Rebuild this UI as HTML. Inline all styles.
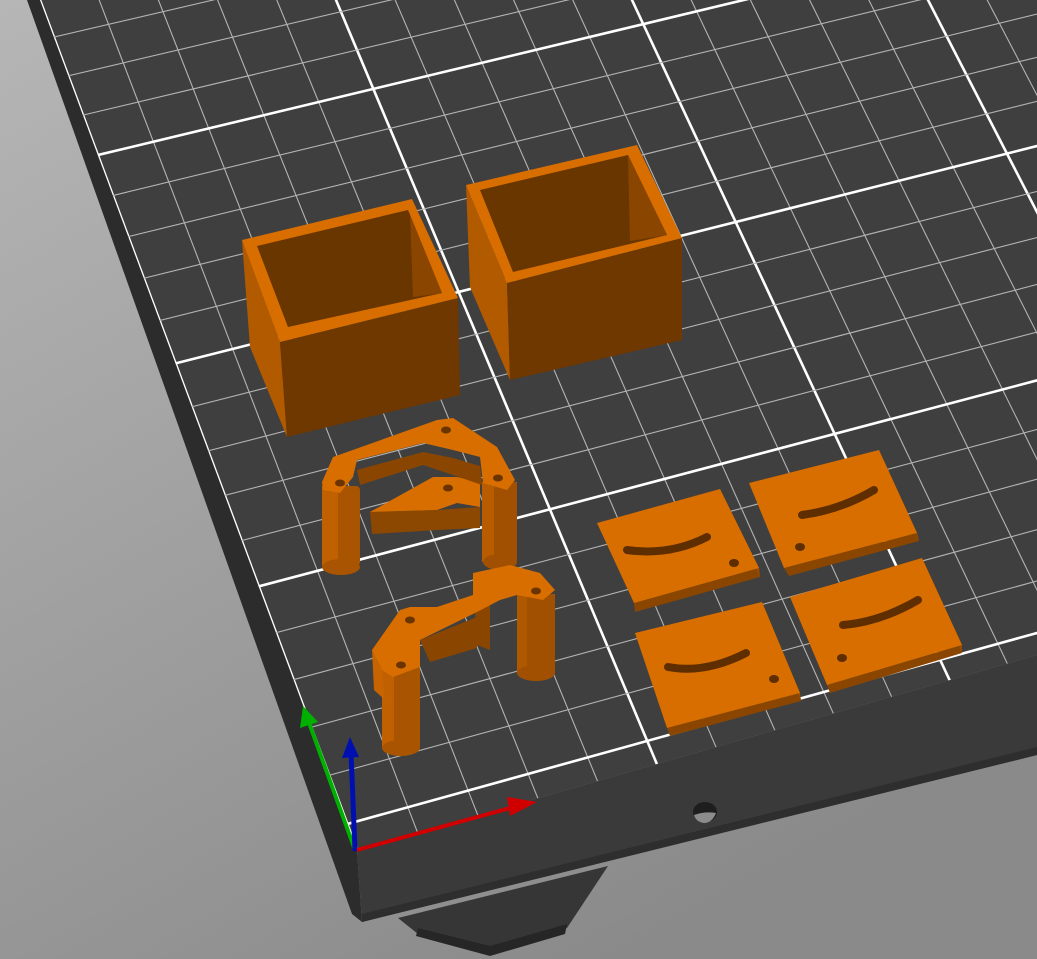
<!DOCTYPE html>
<html><head><meta charset="utf-8"><style>
html,body{margin:0;padding:0;width:1037px;height:959px;overflow:hidden;background:#9c9c9c}
svg{display:block}
</style></head><body>
<svg id="s" width="1037" height="959" viewBox="0 0 1037 959" xmlns="http://www.w3.org/2000/svg">
<defs>
<linearGradient id="bg" x1="0" y1="0" x2="0.6" y2="1">
<stop offset="0" stop-color="#b6b6b6"/><stop offset="1" stop-color="#8a8a8a"/>
</linearGradient>
<clipPath id="topclip"><polygon points="40,0 1037,0 1037,655 357,850"/></clipPath>
</defs>
<rect width="1037" height="959" fill="url(#bg)"/>
<!-- foot -->
<polygon points="398,918 608,866 567,928 490,950 418,934" fill="#363636"/>
<polygon points="418,928 490,946 567,924 565,934 490,956 416,936" fill="#262626"/>
<!-- left side face -->
<polygon points="27,0 40,0 357,850 362,922 352,914" fill="#2c2c2c"/>
<!-- front face -->
<polygon points="357,850 1037,655 1037,755 362,922" fill="#3a3a3a"/>
<polygon points="362,914 1037,747 1037,755 362,922" fill="#2e2e2e"/>
<ellipse cx="705" cy="812" rx="12" ry="10" fill="#1e1e1e"/>
<path d="M694,815 Q705,811 716,813 Q712,823 704,823 Q696,822 694,815Z" fill="#8c8c8c"/>
<!-- top -->
<polygon points="40,0 1037,0 1037,655 357,850" fill="#3f3f3f"/>
<g id="grid" clip-path="url(#topclip)"></g>

<!-- Box 1 -->
<polygon points="242,240 280,342 287,437 250,347" fill="#b25a00"/>
<polygon points="280,342 458,298 460,395 287,437" fill="#6e3800"/>
<polygon points="242,240 412,199 458,298 280,342" fill="#d86e00"/>
<polygon points="257,246 408,210 442,293 288,327" fill="#6a3600"/>
<polygon points="408,210 442,293 413,297 410,214" fill="#8a4600"/>
<!-- Box 2 -->
<polygon points="466,185 507,283 510,380 470,287" fill="#b25a00"/>
<polygon points="507,283 682,238 682,340 510,380" fill="#6e3800"/>
<polygon points="466,185 637,145 682,238 507,283" fill="#d86e00"/>
<polygon points="480,190 628,155 667,235 513,272" fill="#6a3600"/>
<polygon points="628,155 667,235 630,241" fill="#8a4600"/>

<!-- Clamp 1 -->
<g>
<path d="M370,512 L437,510 L480,507 L480,528 L437,530 L372,534 Z" fill="#8c4800"/>
<path d="M370,512 L433,477 L457,477 L480,482 L480,507 L457,503 L437,510 Z" fill="#d86e00"/>
<path d="M357,470 L423,452 L453,458 L480,466 L482,485 L453,475 L423,465 L360,485Z" fill="#8a4600"/>
<rect x="322" y="486" width="38" height="80" rx="4" fill="#a85400"/>
<rect x="322" y="486" width="16" height="80" fill="#c06000"/>
<ellipse cx="341" cy="567" rx="19" ry="8" fill="#a85400"/>
<rect x="482" y="482" width="35" height="80" fill="#a05000"/>
<rect x="482" y="482" width="12" height="80" fill="#b85c00"/>
<ellipse cx="500" cy="562" rx="17" ry="8" fill="#a05000"/>
<path d="M322,482 L333,457 L437,420 L453,418 L497,447 L515,480 L507,490 L483,483 L480,457 L453,450 L423,443 L357,460 L353,477 L340,493 L323,490Z" fill="#d86e00"/>
<ellipse cx="340" cy="483" rx="5" ry="3.5" fill="#6a3400"/>
<ellipse cx="446" cy="430" rx="5" ry="3.5" fill="#6a3400"/>
<ellipse cx="498" cy="478" rx="5" ry="3.5" fill="#6a3400"/>
<ellipse cx="448" cy="488" rx="5" ry="3.5" fill="#6a3400"/>
</g>
<!-- Clamp 2 -->
<g>
<path d="M420,640 L477,617 L477,648 L430,662 Z" fill="#8a4600"/>
<rect x="382" y="668" width="38" height="80" fill="#a85400"/>
<rect x="382" y="668" width="12" height="80" fill="#c06000"/>
<ellipse cx="401" cy="748" rx="19" ry="8" fill="#a85400"/>
<polygon points="372,650 382,670 385,700 374,690" fill="#c86400"/>
<rect x="517" y="594" width="38" height="80" fill="#a05000"/>
<rect x="517" y="594" width="10" height="80" fill="#b05800"/>
<ellipse cx="536" cy="673" rx="19" ry="8" fill="#a05000"/>
<polygon points="473,573 490,578 490,650 477,645" fill="#8a4600"/>
<path d="M372,650 L400,610 L410,607 L437,607 L473,595 L473,573 L510,565 L540,573 L555,590 L543,600 L517,595 L500,600 L477,612 L420,640 L420,667 L393,677 L382,670Z" fill="#d86e00"/>
<ellipse cx="410" cy="620" rx="5" ry="3.5" fill="#6a3400"/>
<ellipse cx="401" cy="665" rx="5" ry="3.5" fill="#6a3400"/>
<ellipse cx="536" cy="591" rx="5" ry="3.5" fill="#6a3400"/>
</g>

<!-- Plates -->
<g stroke-linecap="round">
<polygon points="634,603 759,568 760,577 635,612" fill="#8a4600"/>
<polygon points="720,489 759,568 760,577 721,498" fill="#9a4c00"/>
<polygon points="597,523 720,489 759,568 634,603" fill="#d86e00"/>
<path d="M627,550 Q670,556 707,537" stroke="#5e2e00" stroke-width="8" fill="none"/>
<ellipse cx="734" cy="563" rx="5" ry="4" fill="#5e2e00"/>

<polygon points="784,568 917,533 919,541 789,576" fill="#8a4600"/>
<polygon points="879,450 917,533 919,541" fill="#9a4c00"/>
<polygon points="749,483 879,450 917,533 784,568" fill="#d86e00"/>
<path d="M802,515 Q840,510 874,490" stroke="#5e2e00" stroke-width="8" fill="none"/>
<ellipse cx="800" cy="547" rx="5" ry="4" fill="#5e2e00"/>

<polygon points="667,728 800,693 801,701 670,736" fill="#8a4600"/>
<polygon points="762,602 800,693 801,701" fill="#9a4c00"/>
<polygon points="635,633 762,602 800,693 667,728" fill="#d86e00"/>
<path d="M668,667 Q705,674 746,653" stroke="#5e2e00" stroke-width="8" fill="none"/>
<ellipse cx="774" cy="679" rx="5" ry="4" fill="#5e2e00"/>

<polygon points="827,685 962,645 962,653 830,693" fill="#8a4600"/>
<polygon points="922,558 962,645 962,653" fill="#9a4c00"/>
<polygon points="790,597 922,558 962,645 827,685" fill="#d86e00"/>
<path d="M843,625 Q880,622 918,600" stroke="#5e2e00" stroke-width="8" fill="none"/>
<ellipse cx="842" cy="658" rx="5" ry="4" fill="#5e2e00"/>
</g>

<!-- Axes -->
<line x1="355" y1="850" x2="308" y2="720" stroke="#00b000" stroke-width="4"/>
<polygon points="303,706 318,722 300,728" fill="#00b000"/>
<line x1="355" y1="851" x2="351" y2="752" stroke="#0010b0" stroke-width="5"/>
<polygon points="350,737 359,757 342,758" fill="#0010b0"/>
<line x1="357" y1="850" x2="510" y2="808" stroke="#d00000" stroke-width="4"/>
<polygon points="537,802 507,797 510,816" fill="#d00000"/>
</svg>
<script>
(function(){
var g=document.getElementById('grid');var ns='http://www.w3.org/2000/svg';
function L(x1,y1,x2,y2,maj){var l=document.createElementNS(ns,'line');l.setAttribute('x1',x1);l.setAttribute('y1',y1);l.setAttribute('x2',x2);l.setAttribute('y2',y2);l.setAttribute('stroke',maj?'#ffffff':'#b4b4b4');l.setAttribute('stroke-width',maj?2.6:1.1);g.appendChild(l);}
// lines going back (constant u)
for(var i=0;i<=20;i++){var u=i/5;var y1=-10,y2=900;
 var x1=40+0.373*y1+u*(296+0.047*y1),x2=40+0.373*y2+u*(296+0.047*y2);L(x1,y1,x2,y2,i%5==0);}
// lines parallel to front
var y=824;
for(var k=0;k<40;k++){var xl=40+0.373*y;var s=-0.277+0.037*k/15;
 L(xl-40,y-s*40,1040,y+s*(1040-xl),k%5==0);
 y-=48.7-0.586*k; if(y<-20)break;}
// margin line behind front edge
var y0=824+48.7;var xl0=40+0.373*y0;L(xl0-40,y0+0.29*40,1040,y0-0.29*(1040-xl0),false);
})();
</script>
</body></html>
